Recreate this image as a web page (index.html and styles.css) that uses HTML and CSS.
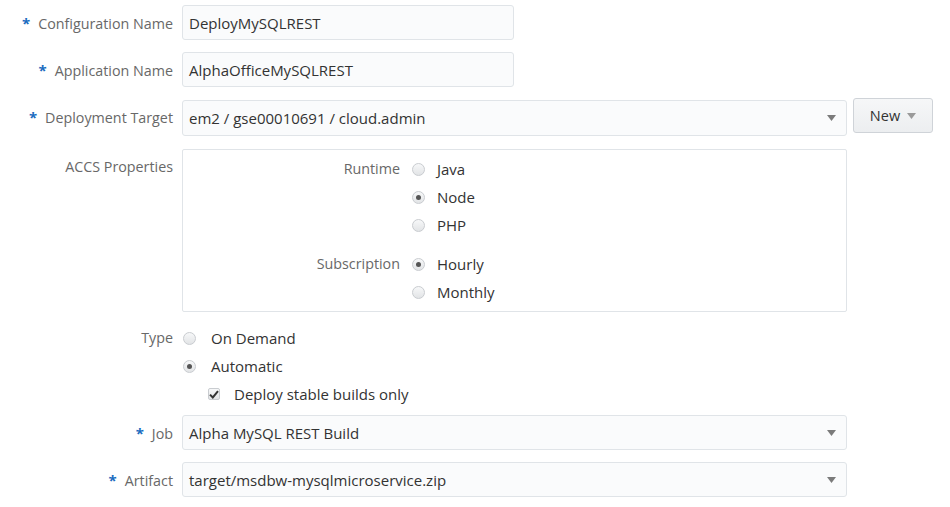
FILE: index.html
```html
<!DOCTYPE html>
<html>
<head>
<meta charset="utf-8">
<link rel="stylesheet" href="styles.css">
</head>
<body>
<form class="form">
  <div class="row r1">
    <label class="lbl"><span class="req">*</span>Configuration Name</label>
    <div class="input short">DeployMySQLREST</div>
  </div>
  <div class="row r2">
    <label class="lbl"><span class="req">*</span>Application Name</label>
    <div class="input short">AlphaOfficeMySQLREST</div>
  </div>
  <div class="row r3">
    <label class="lbl"><span class="req">*</span>Deployment Target</label>
    <div class="with-btn">
      <div class="input select"><span>em2 / gse00010691 / cloud.admin</span><svg class="caret" width="9" height="6" viewBox="0 0 9 6"><path d="M0 0H9L4.5 6Z"/></svg></div>
      <button type="button" class="btn">New <svg class="caret light" width="9" height="6" viewBox="0 0 9 6"><path d="M0 0H9L4.5 6Z"/></svg></button>
    </div>
  </div>
  <div class="row r4">
    <label class="lbl top">ACCS Properties</label>
    <div class="box">
      <div class="group">
        <span class="glbl">Runtime</span>
        <div class="opts">
          <div class="opt"><span class="radio"></span>Java</div>
          <div class="opt"><span class="radio on"></span>Node</div>
          <div class="opt"><span class="radio"></span>PHP</div>
        </div>
      </div>
      <div class="group g2">
        <span class="glbl">Subscription</span>
        <div class="opts">
          <div class="opt"><span class="radio on"></span>Hourly</div>
          <div class="opt"><span class="radio"></span>Monthly</div>
        </div>
      </div>
    </div>
  </div>
  <div class="row r5">
    <label class="lbl top type">Type</label>
    <div class="opts type-opts">
      <div class="opt"><span class="radio"></span>On Demand</div>
      <div class="opt"><span class="radio on"></span>Automatic</div>
      <div class="opt sub"><span class="check"><svg width="10" height="9" viewBox="0 0 10 9"><path d="M1 4.6L3.8 7.4L9 1.2" fill="none" stroke="#333" stroke-width="2"/></svg></span>Deploy stable builds only</div>
    </div>
  </div>
  <div class="row r6">
    <label class="lbl"><span class="req">*</span>Job</label>
    <div class="input select"><span>Alpha MySQL REST Build</span><svg class="caret" width="9" height="6" viewBox="0 0 9 6"><path d="M0 0H9L4.5 6Z"/></svg></div>
  </div>
  <div class="row r7">
    <label class="lbl"><span class="req">*</span>Artifact</label>
    <div class="input select"><span>target/msdbw-mysqlmicroservice.zip</span><svg class="caret" width="9" height="6" viewBox="0 0 9 6"><path d="M0 0H9L4.5 6Z"/></svg></div>
  </div>
</form>
</body>
</html>
```

FILE: styles.css
```css
* { box-sizing: border-box; }
html, body { margin: 0; background: #fff; }
body {
  font-family: "Open Sans", "Noto Sans", sans-serif;
  font-size: 15px;
  color: #333;
}
.form {
  display: flex;
  flex-direction: column;
  padding-top: 5px;
  width: 950px;
}
.row {
  display: grid;
  grid-template-columns: 173px 665px;
  column-gap: 9px;
  align-items: center;
}
.r2, .r3 { margin-top: 12px; }
.r3 { align-items: start; }
.r3 .lbl { padding-top: 8px; }
.r4 { margin-top: 13px; align-items: start; }
.r5 { margin-top: 12px; align-items: start; column-gap: 10px; }
.r6 { margin-top: 7px; }
.r7 { margin-top: 12px; }
.lbl {
  text-align: right;
  color: #686868;
  white-space: nowrap;
  font-size: 14.3px;
}
.lbl.top { padding-top: 8px; }
.lbl.type { padding-top: 4px; }
.req {
  color: #1b6cc0;
  font-weight: bold;
  margin-right: 8px;
  font-size: 15px;
}
.input {
  height: 35px;
  border: 1px solid #e0e4e8;
  border-radius: 3px;
  background: #fafbfc;
  display: flex;
  align-items: center;
  padding: 0 6px;
  color: #333;
}
.input.short { width: 332px; }
.select { width: 665px; justify-content: space-between; padding-right: 10px; }
.caret { fill: #7b7b7b; }
.caret.light { fill: #9a9a9a; margin-left: 7px; }
.with-btn {
  display: flex;
  align-items: flex-start;
  gap: 6px;
  width: 760px;
}
.with-btn .select { flex: none; height: 36px; margin-top: 1px; }
.btn {
  height: 35px;
  width: 80px;
  border: 1px solid #cfd3d8;
  border-radius: 3px;
  background: linear-gradient(#f6f7f8, #eceef0);
  font: inherit;
  font-size: 14.5px;
  color: #333;
  display: flex;
  align-items: center;
  justify-content: center;
  padding: 0;
  margin-top: -1px;
}
.box {
  width: 665px;
  height: 163px;
  border: 1px solid #e0e4e8;
  border-radius: 2px;
  padding: 5px 0;
}
.group {
  display: grid;
  grid-template-columns: 217px auto;
  column-gap: 12px;
}
.g2 { margin-top: 11px; }
.glbl {
  text-align: right;
  color: #686868;
  line-height: 28px;
  font-size: 14.3px;
}
.opts { display: flex; flex-direction: column; }
.opt {
  height: 28px;
  display: flex;
  align-items: center;
  color: #333;
}
.radio {
  width: 13px;
  height: 13px;
  border-radius: 50%;
  border: 1px solid #c9ccd0;
  background: linear-gradient(#f7f8f9, #e2e4e6);
  margin-right: 12px;
  flex: none;
  display: flex;
  align-items: center;
  justify-content: center;
}
.radio.on::after {
  content: "";
  width: 5px;
  height: 5px;
  border-radius: 50%;
  background: #555;
}
.type-opts .radio { margin-right: 15px; }
.opt.sub { padding-left: 25px; }
.check {
  width: 12px;
  height: 12px;
  border: 1px solid #c9ccd0;
  border-radius: 2px;
  background: linear-gradient(#f7f8f9, #e2e4e6);
  margin-right: 14px;
  display: flex;
  align-items: center;
  justify-content: center;
  flex: none;
}
```
